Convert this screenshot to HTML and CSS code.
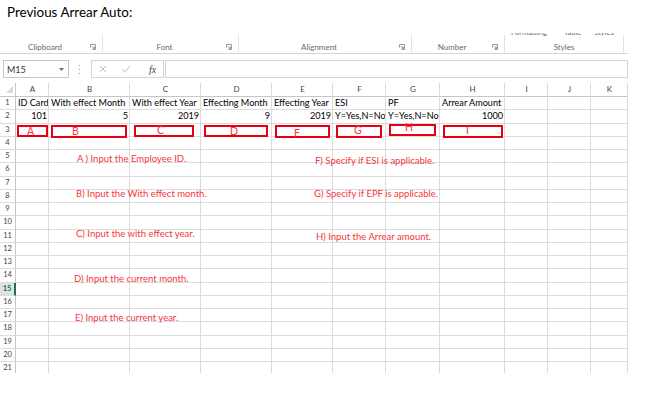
FILE: index.html
```html
<!DOCTYPE html>
<html lang="en">
<head>
  <meta charset="UTF-8">
  <title>Previous Arrear Auto</title>
  <link rel="stylesheet" href="styles.css">
</head>
<body>
  <h1 class="title">Previous Arrear Auto:</h1>

  <div class="excel">
    <!-- ribbon, only the group captions are visible -->
    <div class="ribbon">
      <div class="group g-clipboard">
        <span class="caption">Clipboard</span>
        <svg class="launcher" width="6" height="6" viewBox="0 0 6 6"><path d="M0.5 3.5V0.5H5.5V5.5H2.5" stroke="#9a9a9a" fill="none"/><path d="M2 2L4.5 4.5M4.5 2.8V4.5H2.8" stroke="#9a9a9a" fill="none"/></svg>
      </div>
      <div class="group g-font">
        <span class="caption">Font</span>
        <svg class="launcher" width="6" height="6" viewBox="0 0 6 6"><path d="M0.5 3.5V0.5H5.5V5.5H2.5" stroke="#9a9a9a" fill="none"/><path d="M2 2L4.5 4.5M4.5 2.8V4.5H2.8" stroke="#9a9a9a" fill="none"/></svg>
      </div>
      <div class="group g-align">
        <span class="caption">Alignment</span>
        <svg class="launcher" width="6" height="6" viewBox="0 0 6 6"><path d="M0.5 3.5V0.5H5.5V5.5H2.5" stroke="#9a9a9a" fill="none"/><path d="M2 2L4.5 4.5M4.5 2.8V4.5H2.8" stroke="#9a9a9a" fill="none"/></svg>
      </div>
      <div class="group g-number">
        <span class="caption">Number</span>
        <svg class="launcher" width="6" height="6" viewBox="0 0 6 6"><path d="M0.5 3.5V0.5H5.5V5.5H2.5" stroke="#9a9a9a" fill="none"/><path d="M2 2L4.5 4.5M4.5 2.8V4.5H2.8" stroke="#9a9a9a" fill="none"/></svg>
      </div>
      <div class="group g-styles">
        <div class="cut-labels">
          <span>Formatting</span>
          <span>Table</span>
          <span>Styles</span>
        </div>
        <span class="caption">Styles</span>
      </div>
    </div>

    <!-- formula bar -->
    <div class="formula-bar">
      <div class="name-box">
        <span>M15</span>
        <svg width="5" height="3" viewBox="0 0 5 3"><path d="M0 0H5L2.5 3Z" fill="#6d6d6d"/></svg>
      </div>
      <svg class="grip" width="3" height="11" viewBox="0 0 3 11"><circle cx="1.5" cy="1.5" r="0.8" fill="#b5b5b5"/><circle cx="1.5" cy="5.5" r="0.8" fill="#b5b5b5"/><circle cx="1.5" cy="9.5" r="0.8" fill="#b5b5b5"/></svg>
      <div class="fx-buttons">
        <svg width="8" height="8" viewBox="0 0 8 8"><path d="M1 1L7 7M7 1L1 7" stroke="#b8b8b8" stroke-width="1"/></svg>
        <svg width="10" height="8" viewBox="0 0 10 8"><path d="M1 4.5L3.8 7L9 1" stroke="#b8b8b8" stroke-width="1" fill="none"/></svg>
        <span class="fx">fx</span>
      </div>
      <div class="formula-input"></div>
    </div>

    <!-- worksheet -->
    <div class="sheet">
      <div class="row head">
        <div class="rh corner"><svg width="7" height="7" viewBox="0 0 7 7"><path d="M7 0V7H0Z" fill="#dadada"/></svg></div>
        <div>A</div><div>B</div><div>C</div><div>D</div><div>E</div><div>F</div><div>G</div><div>H</div><div>I</div><div>J</div><div>K</div>
      </div>
      <div class="row">
        <div class="rh">1</div>
        <div>ID Card</div><div>With effect Month</div><div>With effect Year</div><div>Effecting Month</div><div>Effecting Year</div><div>ESI</div><div>PF</div><div>Arrear Amount</div><div></div><div></div><div></div>
      </div>
      <div class="row">
        <div class="rh">2</div>
        <div class="num">101</div><div class="num">5</div><div class="num">2019</div><div class="num">9</div><div class="num">2019</div><div>Y=Yes,N=No</div><div>Y=Yes,N=No</div><div class="num">1000</div><div></div><div></div><div></div>
      </div>
      <div class="row"><div class="rh">3</div><div></div><div></div><div></div><div></div><div></div><div></div><div></div><div></div><div></div><div></div><div></div></div>
      <div class="row"><div class="rh">4</div><div></div><div></div><div></div><div></div><div></div><div></div><div></div><div></div><div></div><div></div><div></div></div>
      <div class="row"><div class="rh">5</div><div></div><div></div><div></div><div></div><div></div><div></div><div></div><div></div><div></div><div></div><div></div></div>
      <div class="row"><div class="rh">6</div><div></div><div></div><div></div><div></div><div></div><div></div><div></div><div></div><div></div><div></div><div></div></div>
      <div class="row"><div class="rh">7</div><div></div><div></div><div></div><div></div><div></div><div></div><div></div><div></div><div></div><div></div><div></div></div>
      <div class="row"><div class="rh">8</div><div></div><div></div><div></div><div></div><div></div><div></div><div></div><div></div><div></div><div></div><div></div></div>
      <div class="row"><div class="rh">9</div><div></div><div></div><div></div><div></div><div></div><div></div><div></div><div></div><div></div><div></div><div></div></div>
      <div class="row"><div class="rh">10</div><div></div><div></div><div></div><div></div><div></div><div></div><div></div><div></div><div></div><div></div><div></div></div>
      <div class="row"><div class="rh">11</div><div></div><div></div><div></div><div></div><div></div><div></div><div></div><div></div><div></div><div></div><div></div></div>
      <div class="row"><div class="rh">12</div><div></div><div></div><div></div><div></div><div></div><div></div><div></div><div></div><div></div><div></div><div></div></div>
      <div class="row"><div class="rh">13</div><div></div><div></div><div></div><div></div><div></div><div></div><div></div><div></div><div></div><div></div><div></div></div>
      <div class="row"><div class="rh">14</div><div></div><div></div><div></div><div></div><div></div><div></div><div></div><div></div><div></div><div></div><div></div></div>
      <div class="row"><div class="rh active">15</div><div></div><div></div><div></div><div></div><div></div><div></div><div></div><div></div><div></div><div></div><div></div></div>
      <div class="row"><div class="rh">16</div><div></div><div></div><div></div><div></div><div></div><div></div><div></div><div></div><div></div><div></div><div></div></div>
      <div class="row"><div class="rh">17</div><div></div><div></div><div></div><div></div><div></div><div></div><div></div><div></div><div></div><div></div><div></div></div>
      <div class="row"><div class="rh">18</div><div></div><div></div><div></div><div></div><div></div><div></div><div></div><div></div><div></div><div></div><div></div></div>
      <div class="row"><div class="rh">19</div><div></div><div></div><div></div><div></div><div></div><div></div><div></div><div></div><div></div><div></div><div></div></div>
      <div class="row"><div class="rh">20</div><div></div><div></div><div></div><div></div><div></div><div></div><div></div><div></div><div></div><div></div><div></div></div>
      <div class="row"><div class="rh">21</div><div></div><div></div><div></div><div></div><div></div><div></div><div></div><div></div><div></div><div></div><div></div></div>

      <!-- red marker boxes drawn over row 3 -->
      <div class="mark mark-a"><span>A</span></div>
      <div class="mark mark-b"><span>B</span></div>
      <div class="mark mark-c"><span>C</span></div>
      <div class="mark mark-d"><span>D</span></div>
      <div class="mark mark-e"><span>F</span></div>
      <div class="mark mark-g"><span>G</span></div>
      <div class="mark mark-h"><span>H</span></div>
      <div class="mark mark-i"><span>I</span></div>

      <!-- text boxes with the instructions -->
      <div class="note note-a">A ) Input the Employee ID.</div>
      <div class="note note-b">B) Input the With effect month.</div>
      <div class="note note-c">C) Input the with effect year.</div>
      <div class="note note-d">D) Input the current month.</div>
      <div class="note note-e">E) Input the current year.</div>
      <div class="note note-f">F) Specify if ESI is applicable.</div>
      <div class="note note-g">G) Specify if EPF is applicable.</div>
      <div class="note note-h">H) Input the Arrear amount.</div>
    </div>
  </div>
</body>
</html>
```

FILE: styles.css
```css
:root {
  --cols: 16px 33px 81px 71px 71px 61px 53px 54px 65px 43px 43px 37px;
  --grid: #dcdcdc;
  --head-line: #c6c6c6;
  --red-line: #e60012;
  --red-text: #f5363c;
}

* {
  margin: 0;
  padding: 0;
  box-sizing: border-box;
}

body {
  background: #fff;
  color: #000;
  font-family: Lato, "Open Sans", sans-serif;
}

.title {
  height: 33px;
  padding: 4px 0 0 7px;
  font-size: 13.4px;
  font-weight: normal;
  line-height: 16px;
}

.excel {
  width: 628px;
}

/* Ribbon */
.ribbon {
  height: 21px;
  display: grid;
  grid-template-columns: 103px 136px 173px 93px 119px;
  border-bottom: 1px solid #d5d5d5;
  overflow: hidden;
}

.group {
  position: relative;
  display: flex;
  align-items: flex-end;
  margin-top: 2px;
  margin-bottom: 1px;
  padding-right: 6px;
  border-right: 1px solid #e1e1e1;
}

.caption {
  flex: 1;
  text-align: center;
  font-size: 8px;
  line-height: 9px;
  color: #6a6a6a;
}

.launcher {
  margin-bottom: 2px;
}

.g-styles {
  flex-direction: column;
  align-items: stretch;
  justify-content: space-between;
  padding-right: 0;
}

.cut-labels {
  display: grid;
  grid-template-columns: 48px 39px 24px;
  margin-top: -6px;
  font-size: 7.5px;
  line-height: 8px;
  color: #6a6a6a;
  text-align: center;
  white-space: nowrap;
}

.g-styles .caption {
  flex: none;
}

/* Formula bar */
.formula-bar {
  display: flex;
  align-items: stretch;
  height: 18px;
  margin: 6px 0 5px;
}

.name-box {
  width: 66px;
  margin-left: 3px;
  padding: 0 4px 0 3px;
  border: 1px solid #c6c6c6;
  display: flex;
  align-items: center;
  justify-content: space-between;
  font-size: 9px;
  color: #333;
}

.grip {
  align-self: center;
  margin: 0 10px 0 9px;
}

.fx-buttons {
  width: 73px;
  border: 1px solid #d4d4d4;
  display: flex;
  align-items: center;
  padding-left: 7px;
  gap: 14px;
}

.fx {
  font-family: "Liberation Serif", serif;
  font-style: italic;
  font-size: 10px;
  color: #444;
  margin-left: 4px;
}

.formula-input {
  flex: 1;
  margin-left: 1px;
  border: 1px solid #d4d4d4;
}

/* Worksheet */
.sheet {
  position: relative;
  height: 290px;
  overflow: hidden;
  font-size: 9.1px;
}

.row {
  display: grid;
  grid-template-columns: var(--cols);
  height: 13.25px;
}

.row > div {
  border-right: 1px solid var(--grid);
  border-bottom: 1px solid var(--grid);
  padding: 0 1px 0 2px;
  line-height: 12.25px;
  white-space: nowrap;
  overflow: hidden;
}

.row > .num {
  text-align: right;
}

.row.head {
  height: 14px;
}

.row.head > div {
  border-bottom-color: var(--head-line);
  text-align: center;
  font-size: 8px;
  line-height: 13px;
  color: #444;
}

.row > .rh {
  border-right-color: var(--head-line);
  padding: 0;
  text-align: center;
  font-size: 7.5px;
  color: #444;
}

.row.head > .corner {
  display: flex;
  align-items: flex-end;
  justify-content: flex-end;
  padding: 0 2px 3px 0;
}

.row > .rh.active {
  background: #e1e1e1;
  color: #217346;
  font-weight: bold;
  border-right: 2px solid #217346;
}

/* red marker boxes */
.mark {
  position: absolute;
  top: 42px;
  height: 12px;
  border: 2px solid var(--red-line);
  background: #fff;
}

.mark span {
  position: absolute;
  font-size: 10.5px;
  line-height: 10px;
  color: var(--red-text);
}

.mark-a { left: 17px; width: 31px; }
.mark-a span { left: 8px; top: -1px; }
.mark-b { left: 51px; width: 76px; height: 13px; }
.mark-b span { left: 19px; top: -1px; }
.mark-c { left: 134px; width: 60px; }
.mark-c span { left: 21px; top: -2px; }
.mark-d { left: 204px; width: 64px; }
.mark-d span { left: 24px; top: -1px; }
.mark-e { left: 275px; width: 55px; height: 13px; }
.mark-e span { left: 17px; top: 1px; }
.mark-g { left: 336px; width: 46px; height: 13px; }
.mark-g span { left: 16px; top: -2px; }
.mark-h { left: 389px; top: 41px; width: 47px; }
.mark-h span { left: 14px; top: -4px; }
.mark-i { left: 443px; width: 60px; height: 13px; }
.mark-i span { left: 21px; top: -2px; }

/* instruction text boxes */
.note {
  position: absolute;
  font-size: 9.5px;
  line-height: 12px;
  color: var(--red-text);
  white-space: nowrap;
}

.note-a { left: 77px; top: 70px; }
.note-b { left: 76px; top: 105px; }
.note-c { left: 76px; top: 145px; }
.note-d { left: 74px; top: 190px; }
.note-e { left: 75px; top: 229px; }
.note-f { left: 315px; top: 72px; }
.note-g { left: 314px; top: 105px; }
.note-h { left: 316px; top: 148px; }
```
